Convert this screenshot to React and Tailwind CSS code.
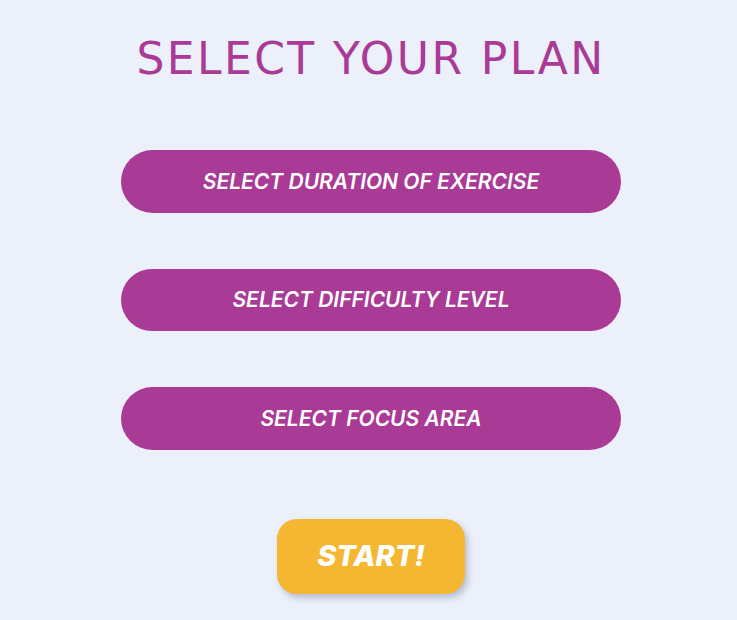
import React from 'react';

const options = [
    'SELECT DURATION OF EXERCISE',
    'SELECT DIFFICULTY LEVEL',
    'SELECT FOCUS AREA',
];

export default function App() {
    return (
        <div className="min-h-[620px] w-full bg-[#ebf0fa] flex flex-col items-center pl-[5px] pt-[36px]" style={{ fontFamily: 'Inter, "Noto Sans", sans-serif' }}>
            <h1 className="text-[44px] leading-[46px] font-normal tracking-[2.4px] text-[#a93a96]" style={{ fontFamily: '"DejaVu Sans", sans-serif' }}>
                SELECT YOUR PLAN
            </h1>
            <div className="flex flex-col gap-[56px] mt-[68px]">
                {options.map((label) => (
                    <button
                        key={label}
                        className="w-[500px] h-[62.5px] rounded-full bg-[#a93a96] text-white text-[21px] font-semibold italic"
                    >
                        {label}
                    </button>
                ))}
            </div>
            <button className="mt-[69px] w-[188px] h-[75px] rounded-[20px] bg-[#f5b731] text-white text-[29px] font-extrabold italic shadow-[3px_4px_6px_rgba(120,130,160,0.45)]">
                START!
            </button>
        </div>
    );
}
